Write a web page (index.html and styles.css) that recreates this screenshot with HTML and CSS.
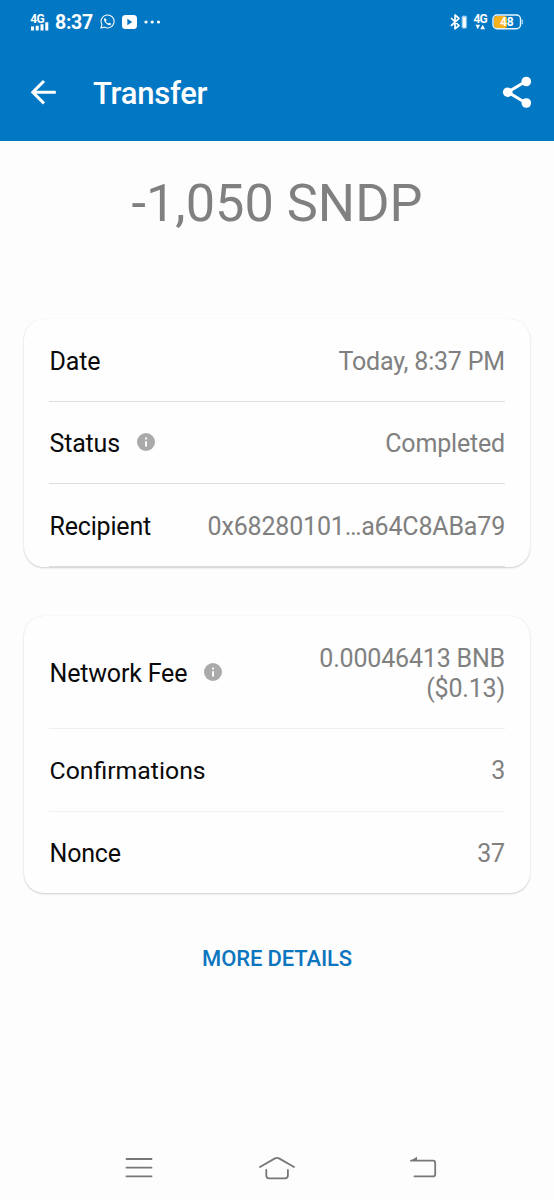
FILE: index.html
```html
<!DOCTYPE html>
<html lang="en">
<head>
<meta charset="utf-8">
<title>Transfer</title>
<link rel="stylesheet" href="styles.css">
</head>
<body>
<div class="screen">
  <header class="header">
    <div class="status-bar">
      <div class="status-left">
        <svg class="signal" width="20" height="20" viewBox="0 0 20 20"><text x="0.300" y="10.500" class="net">4G</text><path d="M1 14.500h3v3.900H1zM5.700 13.700h3v4.700h-3zM10.500 12.300h3v6.100h-3zM15.300 10.300h3v8.100h-3z" fill="#fff"/></svg>
        <span class="clock">8:37</span>
        <svg class="whatsapp" width="15" height="15" viewBox="0 0 24 24"><path d="M1.500 22.500l1.500-5.600A10.400 10.400 0 1 1 7 21z" fill="none" stroke="#fff" stroke-width="1.700" stroke-linejoin="round"/><path d="M8.200 6.200c-1.300.3-2 1.700-1.700 3.300.7 4 4.300 7.500 8.200 8.300 1.600.3 3.100-.6 3.200-2.100l-3.100-1.900-1.700 1.500c-1.800-.8-3-2-3.800-3.800l1.400-1.700z" fill="#fff"/></svg>
        <svg class="video" width="15" height="14" viewBox="0 0 15 14"><rect width="15" height="14" rx="3.500" fill="#fff"/><path d="M5.300 3.700v6.600l5-3.300z" fill="#0277c3"/></svg>
        <svg class="dots" width="17" height="4" viewBox="0 0 17 4"><g fill="#fff"><circle cx="2" cy="2" r="1.600"/><circle cx="8.200" cy="2" r="1.600"/><circle cx="14.500" cy="2" r="1.600"/></g></svg>
      </div>
      <div class="status-right">
        <svg width="18" height="16" viewBox="0 0 18 16"><path d="M1 4l8 7.500-4 3.300V1l4 3.300-8 7.500" fill="none" stroke="#fff" stroke-width="1.700" stroke-linejoin="round"/><rect x="12" y="2" width="4.600" height="12.200" rx="1" fill="#d4edfa" stroke="#72b9e4" stroke-width="1"/><path d="M13 4h2.600v9H13z" fill="#fff"/></svg>
        <svg class="data" width="15" height="18" viewBox="0 0 15 18"><text x="0.500" y="9.700" class="net">4G</text><path d="M2.500 11.700h4.600L4.800 16.200zM7.300 16.200h4.800L9.700 11.700z" fill="#fff"/></svg>
        <svg class="battery" width="32" height="16" viewBox="0 0 32 16"><rect x="2" y="2" width="13" height="12" rx="2.500" fill="#f7b11c"/><rect x="1" y="1" width="27.500" height="13.700" rx="4" fill="none" stroke="#e9f6ff" stroke-width="1.400"/><path d="M30.300 5.500v4.700" stroke="#8fcdf1" stroke-width="1.500"/><text x="14.800" y="11.900" text-anchor="middle" class="level">48</text></svg>
      </div>
    </div>
    <div class="toolbar">
      <svg class="back" width="28" height="26" viewBox="0 0 28 26"><path d="M25.800 13.200H3M14 2L2.800 13.200 14 24.400" fill="none" stroke="#fff" stroke-width="3"/></svg>
      <h1 class="title">Transfer</h1>
      <svg class="share" width="30" height="32" viewBox="0 0 30 32"><path d="M24 5.300L5.700 16.100 24 27" fill="none" stroke="#fff" stroke-width="3"/><g fill="#fff"><circle cx="24.300" cy="5.500" r="4.800"/><circle cx="5.700" cy="16.200" r="4.800"/><circle cx="24.300" cy="27" r="4.800"/></g></svg>
    </div>
  </header>
  <main class="content">
    <div class="amount">-1,050 SNDP</div>
    <section class="card card-main">
      <div class="row"><span class="label">Date</span><span class="value date">Today, 8:37 PM</span></div>
      <div class="row"><span class="label">Status</span><svg class="info" width="18" height="18" viewBox="0 0 18 18"><circle cx="9" cy="9" r="9" fill="#aaa"/><path d="M8.100 4.500h1.900v1.900H8.100zM8.100 8.200h1.900v5.300H8.100z" fill="#fff"/></svg><span class="value">Completed</span></div>
      <div class="row"><span class="label">Recipient</span><span class="value">0x68280101…a64C8ABa79</span></div>
    </section>
    <section class="card card-fee">
      <div class="row row-tall"><span class="label">Network Fee</span><svg class="info" width="18" height="18" viewBox="0 0 18 18"><circle cx="9" cy="9" r="9" fill="#aaa"/><path d="M8.100 4.500h1.900v1.900H8.100zM8.100 8.200h1.900v5.300H8.100z" fill="#fff"/></svg><span class="value">0.00046413 BNB<br>($0.13)</span></div>
      <div class="row"><span class="label confirmations">Confirmations</span><span class="value">3</span></div>
      <div class="row"><span class="label">Nonce</span><span class="value">37</span></div>
    </section>
    <div class="more">MORE DETAILS</div>
  </main>
  <nav class="nav">
    <svg width="28" height="24" viewBox="0 0 28 24"><path d="M1.500 3h25M1.500 11.700h25M1.500 20.400h25" stroke="#777" stroke-width="1.800" stroke-linecap="round"/></svg>
    <svg class="home" width="38" height="26" viewBox="0 0 38 26"><path d="M2 12L16.500 3.600q2.500-1.300 5 0L36 12M8.300 15v5.500q0 2.800 2.800 2.800h16q2.800 0 2.800-2.800V15" fill="none" stroke="#777" stroke-width="1.800" stroke-linecap="round"/></svg>
    <svg width="28" height="24" viewBox="0 0 28 24"><path d="M2 4.700h22q2.200 0 2.200 2.200v11.300q0 2.200-2.200 2.200H5.500" fill="none" stroke="#777" stroke-width="1.800" stroke-linecap="round"/><path d="M1 4.900L8 .800V5z" fill="#777"/></svg>
  </nav>
</div>
</body>
</html>
```
FILE: styles.css
```css
* { box-sizing: border-box; }
body { margin: 0; background: #fdfdfd; font-family: Roboto, sans-serif; }
svg { display: block; flex: none; }
.screen { width: 554px; height: 1200px; display: flex; flex-direction: column; }
.header { height: 141px; background: #0277c3; color: #fff; flex: none; }
.status-bar { height: 43px; padding: 0 30px; display: flex; justify-content: space-between; align-items: center; }
.status-left, .status-right { display: flex; align-items: center; }
.net { font: 700 12px Roboto, sans-serif; fill: #fff; letter-spacing: -0.8px; }
.level { font: 700 12px Roboto, sans-serif; fill: #fff; }
.clock { font-size: 19.500px; font-weight: 700; line-height: 22px; margin: 2px 0 0 5px; width: 38px; white-space: nowrap; letter-spacing: -0.300px; }
.whatsapp { margin-left: 7px; }
.video { margin-left: 7px; }
.dots { margin-left: 7px; }
.data { margin-left: 5px; }
.battery { margin-left: 4px; }
.toolbar { height: 97px; padding: 0 22px 0 30px; display: flex; align-items: center; }
.title { margin: 4px 0 0 35px; font-size: 31px; font-weight: 500; line-height: 36px; letter-spacing: -0.250px; }
.share { margin-left: auto; }
.content { flex: 1; padding: 0 24px; }
.amount { padding-top: 31px; height: 178px; text-align: center; font-size: 52.300px; line-height: 62px; color: #808080; white-space: nowrap; }
.card { border-radius: 20px; padding: 0 25px; background: #fefefe; box-shadow: 0 1px 2px rgba(0,0,0,.18), 0 0 1px rgba(0,0,0,.08); }
.card-main { height: 248px; }
.card-fee { height: 277px; margin-top: 49px; }
.row { height: 82.600px; display: flex; align-items: center; padding-top: 2.900px; border-bottom: 1px solid #dedede; font-size: 25px; line-height: 29.300px; letter-spacing: -0.180px; font-variant-ligatures: common-ligatures; white-space: nowrap; }
.card-fee .row { border-bottom-color: #efefef; padding-top: 1.600px; }
.card-fee .row-tall { height: 113px; padding-top: 3px; }
.card-fee .row:last-child { border-bottom: 0; }
.label { color: #0a0a0a; padding-left: .5px; }
/* Spacing stays at zero so that the "fi" ligature is kept. */
.confirmations { letter-spacing: 0; font-size: 24.800px; }
.info { margin: -4px 0 0 17px; }
.value { margin-left: auto; color: #808080; text-align: right; }
.more { margin-top: 52px; text-align: center; color: #0d75bd; font-size: 22px; font-weight: 500; line-height: 28px; letter-spacing: -0.150px; }
.nav { height: 66px; display: flex; align-items: center; justify-content: space-between; padding: 2px 117px 0 125px; }
.home { margin-right: 8px; }
```
